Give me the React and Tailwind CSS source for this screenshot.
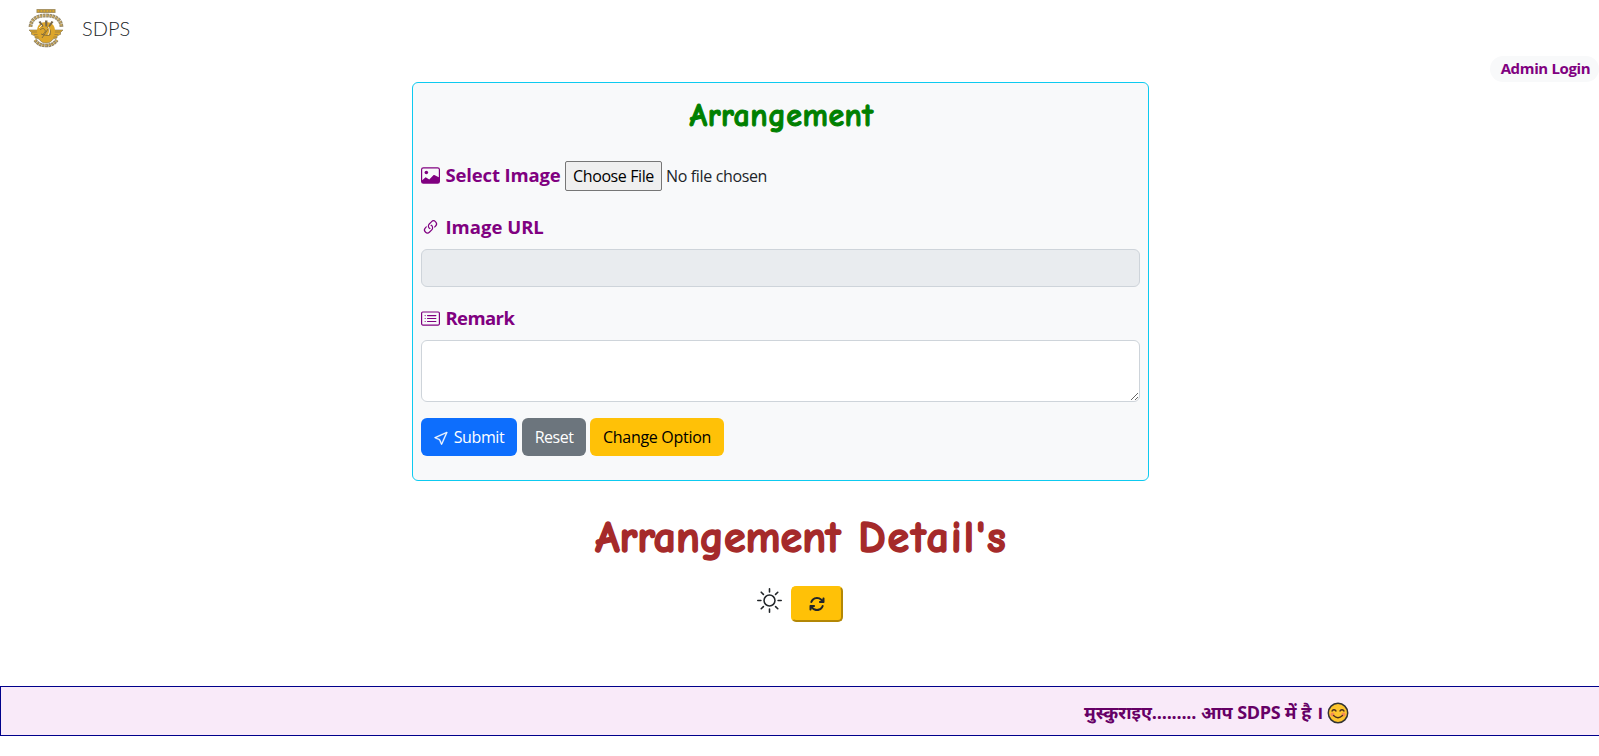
import { BsImage, BsLink45Deg, BsCardList, BsCursor, BsSun } from "react-icons/bs";
import { FaArrowsRotate } from "react-icons/fa6";

function Logo() {
  return (
    <svg viewBox="0 0 36 40" className="h-[40px] w-[36px]" fill="none">
      <path d="M8.500 3h19" stroke="#a08a55" strokeWidth="3.800" />
      <path d="M9.500 3h17" stroke="#d9a52c" strokeWidth="2" strokeDasharray="1.800 1.200" />
      <path d="M2.500 19C3 11 9 7.500 18 7.500S33 11 33.500 19" stroke="#9a8d6c" strokeWidth="3.800" strokeDasharray="2.600 .5" />
      <path d="M2.500 19C3 11 9 7.500 18 7.500S33 11 33.500 19" stroke="#d3ac58" strokeWidth="1.600" strokeDasharray="1.500 1.600" />
      <path d="M1 22h10c0 5 3 8 7 8s7-3 7-8h10l-3 3 1 1-4 2 0 2-4 1c-2 3-4 4-7 4s-5-1-7-4l-4-1v-2l-4-2 1-1z" fill="#dda62b" stroke="#80734f" strokeWidth=".6" />
      <path d="M3.500 24h7M6 26.500h5M8 29h4M25.500 24h7M25 26.500h5M24 29h4" stroke="#8d7643" strokeWidth=".7" />
      <path d="M9 23c0-6 4-9 9-9s9 3 9 9-4 10-9 10-9-4-9-10z" fill="#dda62b" />
      <path d="M17 12.500h2.500l-.4 6h-1.700zM10.500 14l2-1 3 5-1.200 1zM25.500 14l-2-1-3 5 1.200 1z" fill="#77674a" />
      <path d="M12 22c2-2 4-2 5 0s-1 3-3 5m5-8c3 1 4 4 3 8m-9-1c3 1 6 2 9 1m-8 3 6-9" stroke="#70613f" strokeWidth=".8" />
      <path d="M20 19c2 2 2 5 0 8M11 20l3-3" stroke="#fff" strokeWidth=".8" />
      <path d="M7 32c3 4 6 5.500 11 5.500S26 36 29 32" stroke="#948564" strokeWidth="3.600" strokeDasharray="2.600 .4" />
      <path d="M7 32c3 4 6 5.500 11 5.500S26 36 29 32" stroke="#d3ab4c" strokeWidth="1.400" strokeDasharray="1.500 1.500" />
    </svg>
  );
}

function Label({ icon: Icon, text, className }) {
  return (
    <span className="flex items-center whitespace-nowrap text-[18.500px] leading-7 font-bold text-[#800080]">
      <Icon className="mr-[5.500px] size-[19px] shrink-0" />
      <span className={className}>{text}</span>
    </span>
  );
}

export default function App() {
  return (
    <div className="flex h-[756px] flex-col overflow-hidden bg-white font-['Segoe_UI','Open_Sans','Noto_Sans',sans-serif] text-[16px] text-[#212529]">
      <header className="flex h-14 items-center pl-[28px]">
        <Logo />
        <span className="ml-[18px] font-['Lato',sans-serif] text-[20px] font-light">SDPS</span>
      </header>
      <div className="flex h-[26px] justify-end">
        <a className="flex h-[26px] w-[109px] items-center justify-center rounded-full bg-[#f8f9fa] pb-[2px] pl-[2px] text-[15px] font-bold tracking-[-0.350px] whitespace-nowrap text-[#800080]">Admin Login</a>
      </div>
      <form className="ml-[412px] flex h-[399px] w-[737px] shrink-0 flex-col rounded-md border border-[#0dcaf0] bg-[#f8f9fa] px-2">
        <h2 className="mt-[11px] h-[44px] pl-[2px] text-center font-['Comic_Sans_MS','Comic_Neue',cursive] text-[32px] leading-[44px] font-bold tracking-[0.5px] text-[#008000] [-webkit-text-stroke:1px_#008000]">Arrangement</h2>
        <div className="mt-[23px] flex h-[30px] items-center whitespace-nowrap">
          <span className="-mt-[2px] w-[144px] tracking-[-0.15px]"><Label icon={BsImage} text="Select Image" /></span>
          <button type="button" className="h-[30px] w-[97px] rounded-[2px] border border-[#767676] bg-[#efefef] text-[16px] tracking-[-0.4px] text-black">Choose File</button>
          <span className="ml-[4px] tracking-[-0.35px]">No file chosen</span>
        </div>
        <div className="mt-[22px]"><Label icon={BsLink45Deg} text="Image URL" /></div>
        <input disabled className="mt-[8px] h-[38px] rounded-md border border-[#ced4da] bg-[#e9ecef]" />
        <div className="mt-[17px]"><Label icon={BsCardList} text="Remark" className="tracking-[-0.6px]" /></div>
        <textarea className="mt-[8px] h-[62px] shrink-0 resize-y rounded-md border border-[#ced4da] bg-white" />
        <div className="mt-4 flex h-[38px] shrink-0 whitespace-nowrap">
          <button type="button" className="flex w-24 items-center justify-center gap-[5px] rounded-md bg-[#0d6efd] tracking-[-0.4px] text-white"><BsCursor className="size-[15px] stroke-current stroke-[.4]" />Submit</button>
          <button type="button" className="ml-[5px] w-16 rounded-md bg-[#6c757d] tracking-[-0.5px] text-white">Reset</button>
          <button type="button" className="ml-1 w-[134px] rounded-md bg-[#ffc107] tracking-[-0.3px] text-black">Change Option</button>
        </div>
      </form>
      <h1 className="mt-[27px] h-[60px] pl-[4px] text-center font-['Comic_Sans_MS','Comic_Neue',cursive] text-[44px] leading-[60px] font-bold whitespace-nowrap text-[#a52a2a] [-webkit-text-stroke:1.5px_#a52a2a]">Arrangement <span className="ml-[2px] tracking-[2px]">Detail's</span></h1>
      <div className="mt-[18px] flex h-[36px] pl-[757px]">
        <BsSun className="mt-[2px] size-[25px]" />
        <button className="ml-[9px] flex h-[36px] w-[52px] items-center justify-center rounded-[5px] border-2 border-t-[#ffc107] border-r-[#b38705] border-b-[#b38705] border-l-[#ffc107] bg-[#ffc107]">
          <FaArrowsRotate className="size-4" />
        </button>
      </div>
      <div className="mt-[64px] flex h-[50px] w-full shrink-0 items-center border border-r-0 border-[#00008b] bg-[#f9eaf9] pt-[3px] pl-[1083px] text-[18px] font-bold whitespace-nowrap text-[#660066]">
        <span className="w-[243px]">मुस्कुराइए<span className="tracking-[-0.2px]">.........</span> आप <span className="tracking-[-0.4px]">SDPS</span> में है ।</span>
        <svg viewBox="0 0 22 22" className="size-[22px]">
          <circle cx="11" cy="11" r="9.700" fill="#fdc52e" stroke="#333" strokeWidth="1.500" />
          <circle cx="5.500" cy="12.500" r="2" fill="#f58b55" /><circle cx="16.500" cy="12.500" r="2" fill="#f58b55" />
          <path d="M5 9q2-2.500 4 0m4 0q2-2.500 4 0M6.500 13.500q4.500 4.500 9 0" fill="none" stroke="#4a3020" strokeWidth="1.300" strokeLinecap="round" />
        </svg>
      </div>
    </div>
  );
}
